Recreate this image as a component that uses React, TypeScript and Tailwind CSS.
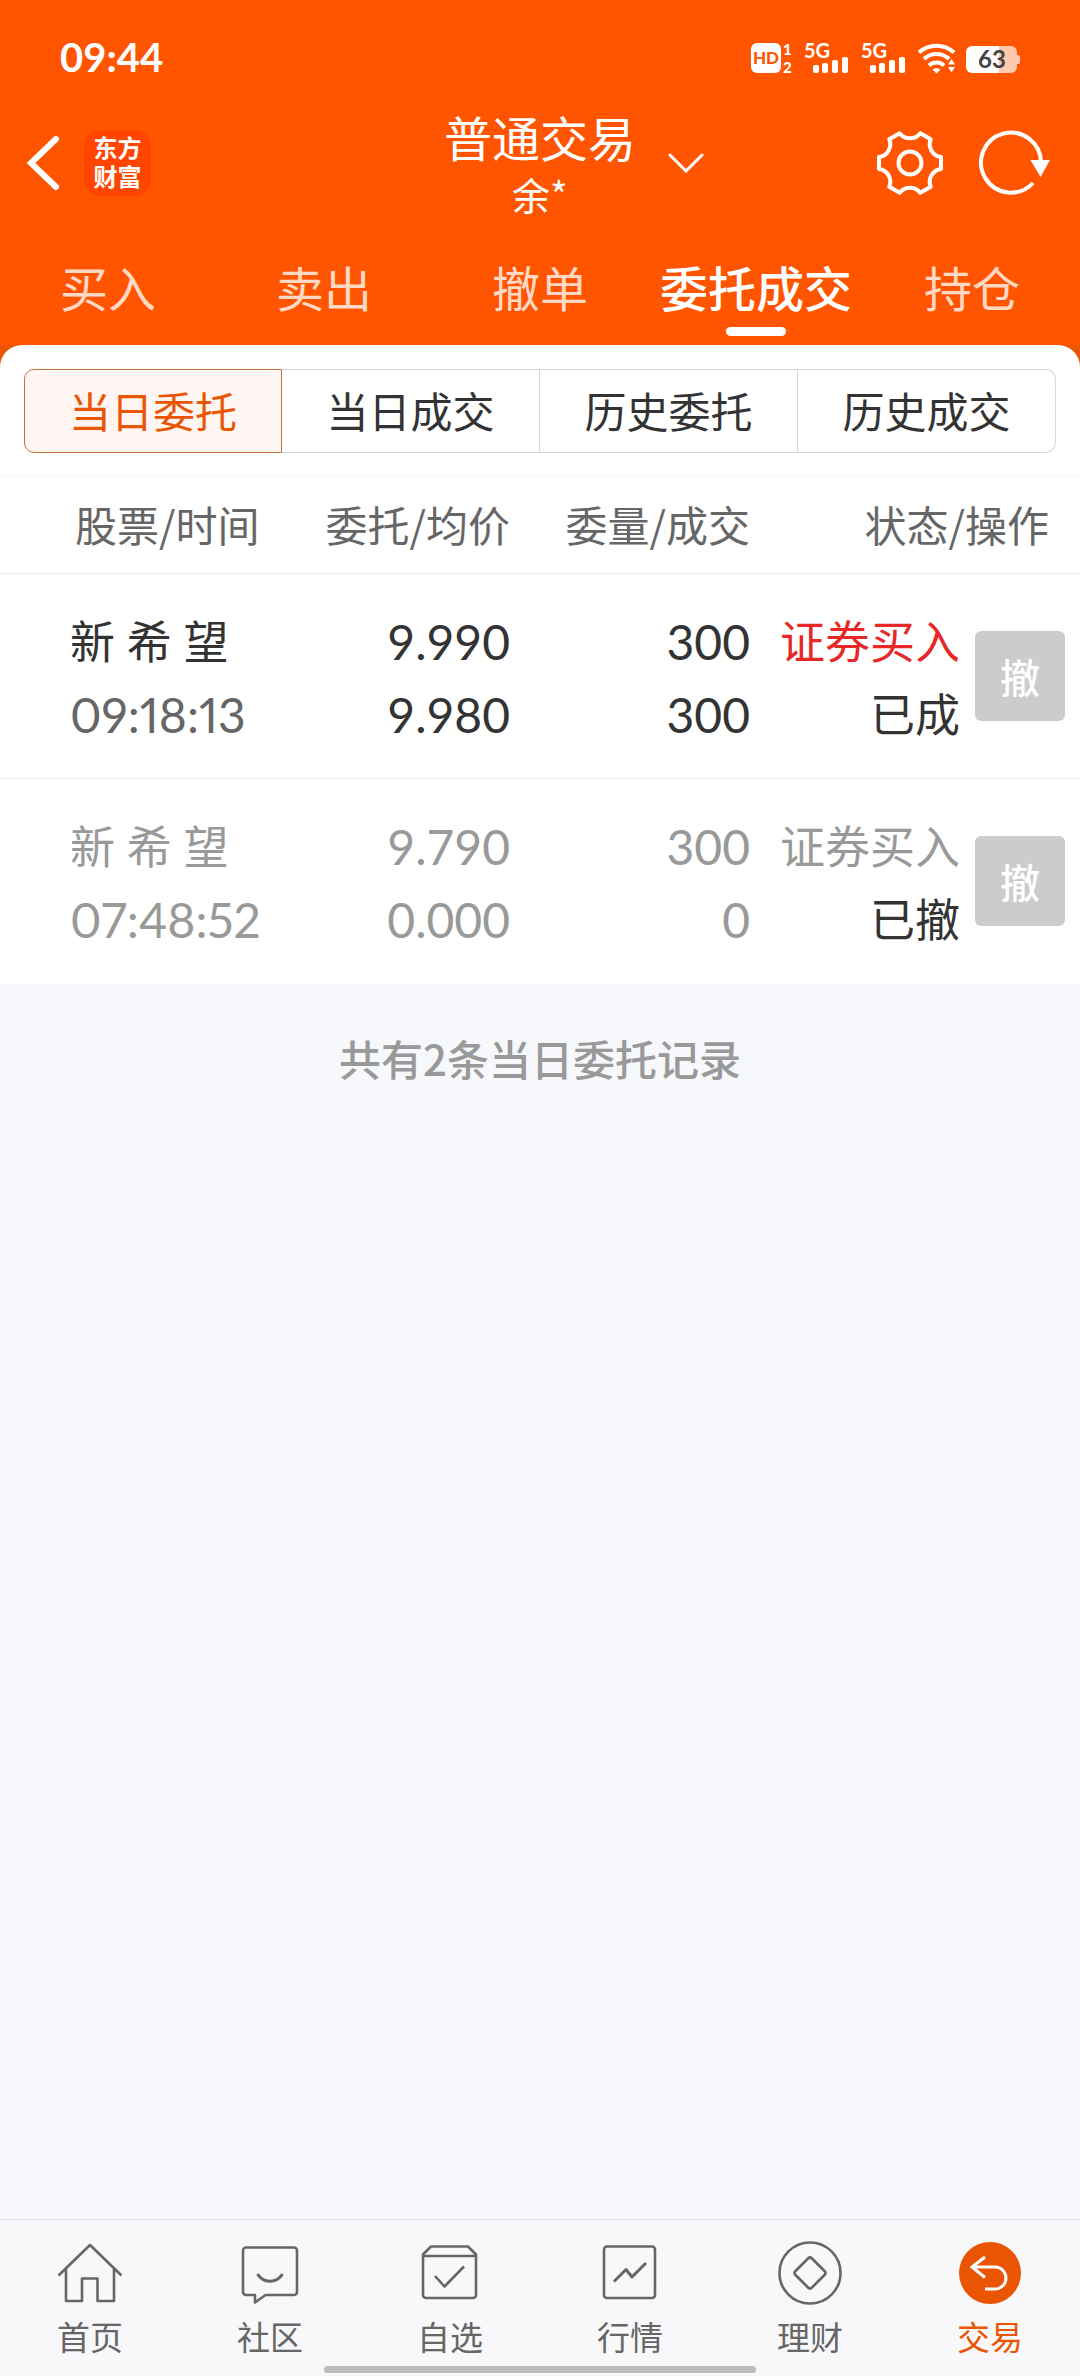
import { FC, ReactNode } from "react";

type Order = {
  id: string;
  name: string;
  time: string;
  price: string;
  average: string;
  quantity: string;
  filled: string;
  side: string;
  status: string;
  cancelled: boolean;
};

const ORDERS: Order[] = [
  {
    id: "1",
    name: "新 希 望",
    time: "09:18:13",
    price: "9.990",
    average: "9.980",
    quantity: "300",
    filled: "300",
    side: "证券买入",
    status: "已成",
    cancelled: false,
  },
  {
    id: "2",
    name: "新 希 望",
    time: "07:48:52",
    price: "9.790",
    average: "0.000",
    quantity: "300",
    filled: "0",
    side: "证券买入",
    status: "已撤",
    cancelled: true,
  },
];

const TABS = ["买入", "卖出", "撤单", "委托成交", "持仓"];
const FILTERS = ["当日委托", "当日成交", "历史委托", "历史成交"];

const Signal: FC = () => (
  <svg width="46" height="32" viewBox="0 0 46 32" className="overflow-visible" fill="#fff" aria-hidden="true">
    <text x="0" y="16" fontSize="20" fontWeight="700">
      5G
    </text>
    <rect x="9" y="23" width="6" height="8" rx="2" />
    <rect x="18" y="21" width="6" height="10" rx="2" />
    <rect x="28" y="18" width="6" height="13" rx="2" />
    <rect x="38" y="15" width="6" height="16" rx="2" />
  </svg>
);

const StatusBar: FC = () => (
  <div className="flex h-[100px] items-start justify-between pt-[42px] pr-[60px] pl-[60px] font-[Lato,sans-serif] tabular-nums">
    <span className="text-[40px] leading-[30px] font-bold">09:44</span>
    <div className="flex">
      <svg width="43" height="32" viewBox="0 0 43 32" className="overflow-visible" fill="#fff" aria-hidden="true">
        <rect x="0" y="1" width="30" height="30" rx="6" />
        <text x="15" y="22" fontSize="17" fontWeight="900" textAnchor="middle" fill="#f50">
          HD
        </text>
        <text x="32" y="13" fontSize="15" fontWeight="900">
          1
        </text>
        <text x="32" y="31" fontSize="15" fontWeight="900">
          2
        </text>
      </svg>
      <span className="ml-[10px] flex gap-[11px]">
        <Signal />
        <Signal />
      </span>
      <svg width="38" height="32" viewBox="0 0 38 32" className="ml-[11px]" fill="none" stroke="#fff" strokeWidth="4" aria-hidden="true">
        <path d="M1 10.500a26 26 0 0 1 35 0" />
        <path d="M6 17a18 18 0 0 1 25 0" />
        <path d="M11 23.500a11 11 0 0 1 15 0" />
        <path d="M14.500 27.500q4-3 8 0l-4 4z" fill="#fff" stroke="none" />
        <path d="M33.500 17l3.500 5.500h-7zM33.500 30.500l3.500-5.500h-7z" fill="#fff" stroke="none" />
      </svg>
      <svg width="54" height="32" viewBox="0 0 54 32" className="ml-[10px]" aria-hidden="true">
        <path d="M32 4h13a6 6 0 0 1 6 6v3q3 0 3 2v5q0 2-3 2v3a6 6 0 0 1-6 6H32z" fill="#ffc9ae" />
        <path d="M6 4h27v27H6a6 6 0 0 1-6-6V10a6 6 0 0 1 6-6z" fill="#fff" />
        <text x="26" y="26" fontSize="24" fontWeight="700" textAnchor="middle" fill="#444">
          63
        </text>
      </svg>
    </div>
  </div>
);

const TitleBar: FC = () => (
  <div className="grid h-[126px] grid-cols-[1fr_auto_1fr] items-center">
    <div className="flex items-center gap-6 pl-[26px]">
      <button aria-label="返回">
        <svg width="34" height="58" viewBox="0 0 34 58" fill="none" stroke="#fff" strokeWidth="6" strokeLinecap="round">
          <path d="M30 5L5 29l25 24" />
        </svg>
      </button>
      <span className="w-[67px] rounded-2xl bg-[#ff4500] py-1 text-center font-[Liberation_Sans,Noto_Sans_CJK_SC,sans-serif] text-[24px] leading-[29px] font-bold">
        东方
        <br />
        财富
      </span>
    </div>
    <button className="flex items-center gap-8 pl-[68px]">
      <span className="flex flex-col pt-1 text-center">
        <span className="text-[48px] leading-[58px]">普通交易</span>
        <span className="text-[38px] leading-[58px]">余*</span>
      </span>
      <svg width="36" height="20" viewBox="0 0 36 20" fill="none" stroke="#fff" strokeWidth="3" strokeLinecap="round">
        <path d="M2 2l16 16L34 2" />
      </svg>
    </button>
    <div className="flex items-center justify-end gap-9 pr-[29px]">
      <button aria-label="设置">
        <svg width="66" height="66" viewBox="-33 -33 66 66" fill="none" stroke="#fff" strokeWidth="4" strokeLinejoin="round">
          <path d="M31-6V6A13 13 0 0 0 20.700 23.800L10.300 29.800A13 13 0 0 0-10.300 29.800L-20.700 23.800A13 13 0 0 0-31 6V-6A13 13 0 0 0-20.700-23.800L-10.300-29.800A13 13 0 0 0 10.300-29.800L20.700-23.800A13 13 0 0 0 31-6z" />
          <circle r="11.500" />
        </svg>
      </button>
      <button aria-label="刷新">
        <svg width="72" height="66" viewBox="0 0 72 66" fill="none" stroke="#fff" strokeWidth="4">
          <path d="M62 33A30 30 0 1 0 54 53" />
          <path d="M51.500 30h19.500l-9.500 17z" fill="#fff" stroke="none" />
        </svg>
      </button>
    </div>
  </div>
);

const Tabs: FC = () => (
  <nav className="grid grid-cols-5 pt-6">
    {TABS.map((tab) => {
      const active = tab === "委托成交";
      return (
        <button key={tab} className="flex flex-col items-center gap-[5px] pb-[9px] whitespace-nowrap">
          <span className={active ? "text-[48px] leading-[72px] font-medium" : "text-[48px] leading-[72px] text-[#ffd9c5]"}>{tab}</span>
          {active && <span className="h-[9px] w-[60px] rounded-full bg-white" />}
        </button>
      );
    })}
  </nav>
);

const Filters: FC = () => (
  <div className="grid grid-cols-4 px-6 pt-6 pb-[23px]">
    {FILTERS.map((filter, i) => (
      <button
        key={filter}
        className={
          i === 0
            ? "h-[84px] rounded-l-[10px] border border-[#c8703c] bg-[#fff5f2] pb-1 text-[42px] text-[#ea5504]"
            : "h-[84px] border border-l-0 border-[#d3d5d6] pb-1 text-[42px] text-[#333] last:rounded-r-[10px]"
        }>
        {filter}
      </button>
    ))}
  </div>
);

const OrderRow: FC<{ order: Order }> = ({ order }) => {
  const tone = order.cancelled ? "text-[#999]" : "text-[#333]";

  return (
    <tr className={`h-[205px] border-b border-[#ececec] text-right font-[Lato,sans-serif] text-[48px] leading-[73px] tabular-nums last:border-b-0 ${tone}`}>
      <td className="pt-[3px] pl-[70px] text-left">
        <div className="font-[Noto_Sans,Noto_Sans_CJK_SC,sans-serif] text-[45px]">{order.name}</div>
        <div className={order.cancelled ? "proportional-nums" : "text-[#666] proportional-nums"}>{order.time}</div>
      </td>
      <td className="pt-[3px]">
        <div>{order.price}</div>
        <div>{order.average}</div>
      </td>
      <td className="pt-[3px]">
        <div>{order.quantity}</div>
        <div>{order.filled}</div>
      </td>
      <td className="font-[Noto_Sans_CJK_SC,sans-serif] text-[45px]">
        <div className={order.cancelled ? "" : "text-[#e62828]"}>{order.side}</div>
        <div className="text-[#333]">{order.status}</div>
      </td>
      <td className="pr-[15px]">
        <button
          disabled
          className="ml-auto block size-[90px] rounded-md bg-[#ccc] font-[Noto_Sans_CJK_SC,sans-serif] text-[40px] leading-[90px] font-medium text-white">
          撤
        </button>
      </td>
    </tr>
  );
};

const OrderTable: FC = () => (
  <table className="w-full table-fixed border-t border-[#f5f5f5]">
    <colgroup>
      <col />
      <col className="w-[240px]" />
      <col className="w-[240px]" />
      <col className="w-[210px]" />
      <col className="w-[120px]" />
    </colgroup>
    <thead>
      <tr className="h-[97px] border-b border-[#e8e8e8] text-right text-[42px] text-[#666] *:pb-1 *:font-normal">
        <th className="pl-[75px] text-left">股票/时间</th>
        <th>委托/均价</th>
        <th>委量/成交</th>
        <th colSpan={2} className="pr-[31px]">
          状态/操作
        </th>
      </tr>
    </thead>
    <tbody>
      {ORDERS.map((order) => (
        <OrderRow key={order.id} order={order} />
      ))}
    </tbody>
  </table>
);

type NavItemProps = {
  label: string;
  active?: boolean;
  children: ReactNode;
};

const NavItem: FC<NavItemProps> = ({ label, active, children }) => (
  <a href="#" className={`flex flex-col items-center gap-[10px] ${active ? "text-[#ea5504]" : "text-[#666]"}`}>
    <svg width="66" height="66" viewBox="0 0 66 66" fill="none" stroke="currentColor" strokeWidth="2.600" strokeLinejoin="round" aria-hidden="true">
      {children}
    </svg>
    <span className="text-[33px] leading-10">{label}</span>
  </a>
);

const BottomNav: FC = () => (
  <footer className="border-t border-[#e1e4e6] bg-[#f8f8fa] pt-5 pb-[3px]">
    <nav className="grid grid-cols-6">
      <NavItem label="首页">
        <path d="M1.500 35.500L33 5l31.500 30.500M9 29v32h16V38.500h15.500V61H57V29" />
      </NavItem>
      <NavItem label="社区">
        <path d="M9 7.500h48a3 3 0 0 1 3 3V52a3 3 0 0 1-3 3H28.500L18 62.500V55H9a3 3 0 0 1-3-3V10.500a3 3 0 0 1 3-3z" />
        <path d="M20.500 34a14.500 14.500 0 0 0 25 0" strokeWidth="3" />
      </NavItem>
      <NavItem label="自选">
        <path d="M6 14.500L14 6.500h37l8 8V55a3 3 0 0 1-3 3H9a3 3 0 0 1-3-3zM6 16h53M18 36l9.500 10.500L47 26.500" />
      </NavItem>
      <NavItem label="行情">
        <rect x="7" y="6.500" width="51" height="51.500" rx="3" />
        <path d="M17 41.500l12-12 6 7.500 14-14" strokeWidth="3" />
      </NavItem>
      <NavItem label="理财">
        <circle cx="33" cy="33" r="30.500" />
        <path d="M31 18.500q2-2 4 0L47.500 31q2 2 0 4L35 47.500q-2 2-4 0L18.500 35q-2-2 0-4z" />
      </NavItem>
      <NavItem label="交易" active>
        <circle cx="33" cy="33" r="31" fill="currentColor" stroke="none" />
        <path d="M28 17L15 27l13 10.500M15 27h23a11 11 0 0 1 0 22H28" stroke="#fff" strokeWidth="3" strokeLinejoin="miter" />
      </NavItem>
    </nav>
    <div className="mx-auto mt-[10px] h-[7px] w-2/5 rounded-full bg-[#bcbcbc]" />
  </footer>
);

export default function App() {
  return (
    <div className="flex min-h-screen flex-col bg-[#f6f8fb] font-[Noto_Sans_CJK_SC,sans-serif]">
      <header className="bg-[#f50] text-white">
        <StatusBar />
        <TitleBar />
        <Tabs />
      </header>
      <main className="flex-1">
        <div className="bg-[#ea5504]">
          <section className="rounded-t-[22px] bg-white">
            <Filters />
            <OrderTable />
          </section>
        </div>
        <p className="pt-[42px] text-center text-[42px] leading-[63px] font-medium text-[#999]">共有2条当日委托记录</p>
      </main>
      <BottomNav />
    </div>
  );
}
